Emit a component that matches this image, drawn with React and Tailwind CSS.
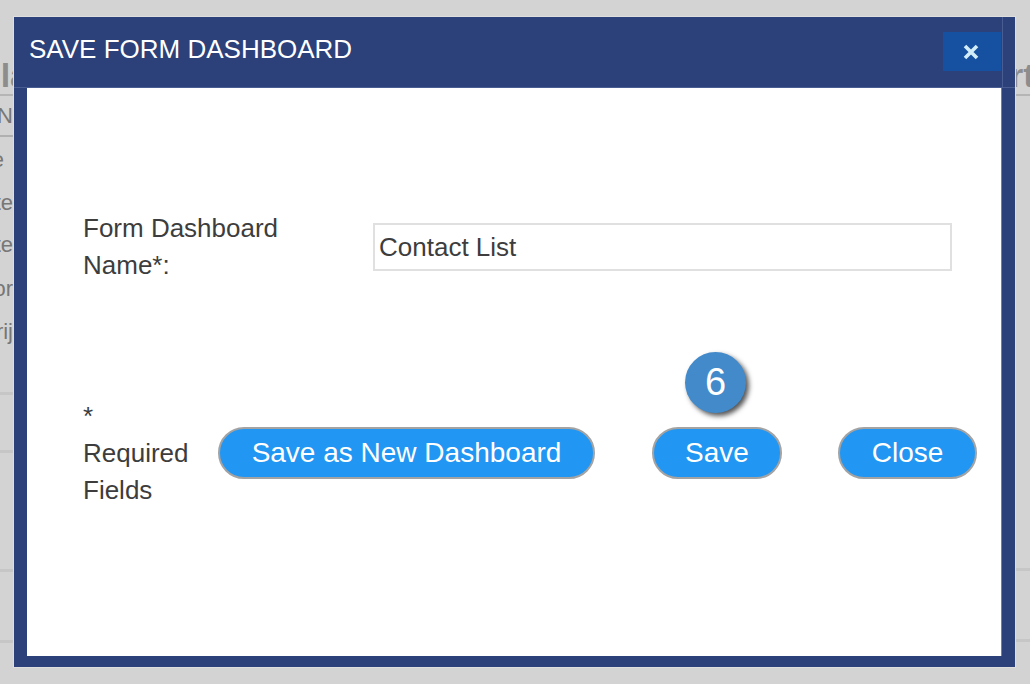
import React from 'react';

const font = 'font-["Liberation_Sans",Arial,sans-serif]';

const PillButton = ({ children, className }) => (
  <button
    type="button"
    className={`h-[52px] rounded-full border-2 border-[#a3a3a3] bg-[#2196f3] text-[28px] leading-none text-white ${className}`}
  >
    {children}
  </button>
);

const Divider = ({ className }) => <div className={`h-[3px] bg-[#c6c6c6] ${className}`} />;

const App = () => {
  return (
    <div className={`flex h-[684px] w-[1030px] overflow-hidden bg-[#d3d3d3] ${font}`}>
      {/* page behind the modal, left edge */}
      <div className="flex w-[13px] shrink-0 flex-col items-end overflow-hidden text-[#777]">
        <div className="mr-[-16px] mt-[56px] whitespace-nowrap text-[34px] font-bold leading-[38px] text-[#8d8d8d]">la</div>
        <div className="h-[2px] w-full shrink-0 bg-[#b5b5b5]" />
        <div className="mt-[7px] whitespace-nowrap text-[22px] leading-[26px]">N</div>
        <div className="mt-[6px] h-[2px] w-full shrink-0 bg-[#b0b0b0]" />
        <div className="mr-[9px] mt-[10px] whitespace-nowrap text-[22px] leading-[26px]">e</div>
        <div className="mt-[17px] whitespace-nowrap text-[22px] leading-[26px]">te</div>
        <div className="mt-[16px] whitespace-nowrap text-[22px] leading-[26px]">te</div>
        <div className="mt-[18px] whitespace-nowrap text-[22px] leading-[26px]">or</div>
        <div className="mt-[17px] whitespace-nowrap text-[22px] leading-[26px]">rij</div>
        <Divider className="mt-[47px] w-full shrink-0" />
        <Divider className="mt-[55px] w-full shrink-0" />
        <Divider className="mt-[116px] w-full shrink-0" />
        <Divider className="mt-[68px] w-full shrink-0" />
      </div>

      {/* modal */}
      <div className="mt-[16px] flex h-[652px] w-[1003px] shrink-0 flex-col border border-[#dedede] bg-[#2c4079]">
        <div className="flex h-[71px] shrink-0 items-start border-b border-[#4a5d92] pl-[15px]">
          <h2 className="mt-[15px] flex-1 text-[26px] leading-[34px] text-white">SAVE FORM DASHBOARD</h2>
          <button type="button" className="mr-px mt-[15px] flex h-[39px] w-[58px] items-center justify-center bg-[#1650a0] pr-[2px]">
            <svg width="16" height="16" viewBox="0 0 16 16" fill="none">
              <path d="M2 2 L14 14 M14 2 L2 14" stroke="#d2ecf8" strokeWidth="3.6" />
            </svg>
          </button>
          <div className="w-[13px] self-stretch border-l border-[#4a5d92]" />
        </div>

        <div className="ml-[13px] h-[568px] w-[975px] shrink-0 border-r border-[#6f7fa8] bg-white pl-[56px] pt-[122px] text-[26px] leading-[37px] text-[#3d3d3d]">
          <div className="flex items-center">
            <label className="w-[290px] shrink-0">
              Form Dashboard
              <br />
              Name*:
            </label>
            <input
              readOnly
              value="Contact List"
              className="h-[48px] w-[579px] border-2 border-[#e0e0e0] px-[4px] text-[26px] text-[#3d3d3d] outline-none"
            />
          </div>

          <div className="mt-[112px] flex items-center">
            <div className="w-[135px] shrink-0 pt-[2px]">
              *
              <br />
              Required
              <br />
              Fields
            </div>
            <PillButton className="w-[377px]">Save as New Dashboard</PillButton>
            <div className="relative ml-[57px]">
              <div className="absolute -top-[75px] left-[33px] flex h-[61px] w-[61px] items-center justify-center rounded-full bg-[#438aca] text-[38px] leading-none text-white shadow-[3px_3px_5px_#555]">
                6
              </div>
              <PillButton className="w-[130px]">Save</PillButton>
            </div>
            <PillButton className="ml-[56px] w-[139px]">Close</PillButton>
          </div>
        </div>
      </div>

      {/* page behind the modal, right edge */}
      <div className="flex min-w-0 flex-1 flex-col overflow-hidden">
        <div className="ml-[-6px] mt-[56px] whitespace-nowrap text-[34px] font-bold leading-[38px] text-[#8d8d8d]">rt</div>
        <div className="h-[2px] w-full shrink-0 bg-[#b5b5b5]" />
        <Divider className="mt-[472px] w-full shrink-0" />
        <Divider className="mt-[68px] w-full shrink-0" />
      </div>
    </div>
  );
};

export default App;
